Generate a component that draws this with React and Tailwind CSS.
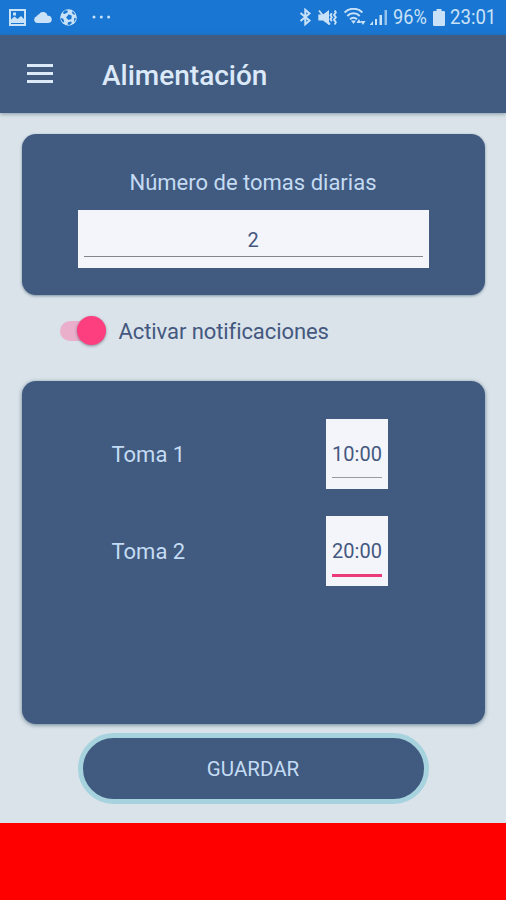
import { useState } from 'react';

const INITIAL_FEEDINGS = [
  { id: 1, label: 'Toma 1', time: '10:00' },
  { id: 2, label: 'Toma 2', time: '20:00' },
];

function StatusBar() {
  return (
    <div className="flex h-[35px] shrink-0 items-center bg-[#1976d2] pb-px text-[#c9e2f8]">
      <svg className="ml-[9px] h-[17px] w-[17px]" viewBox="0 0 17 17" fill="none" aria-hidden="true">
        <rect x="1" y="1" width="15" height="15" stroke="currentColor" strokeWidth="2" />
        <path d="M2 14v-3.500l3.500-3 3 2.500 3.500-3L15 10v4z" fill="currentColor" />
        <path d="M4 3.500h3v3H4z" fill="currentColor" />
      </svg>
      <svg className="ml-2 h-[12px] w-[18px]" viewBox="0 0 18 12" fill="currentColor" aria-hidden="true">
        <path d="M3.500 12A3.400 3.400 0 0 1 2.800 5.300 3 3 0 0 1 5 3.200 4.600 4.600 0 0 1 13.500 4.800 3.600 3.600 0 0 1 14.600 12z" />
      </svg>
      <svg className="ml-[8px] h-[17px] w-[17px]" viewBox="0 0 17 17" aria-hidden="true">
        <circle cx="8.500" cy="8.500" r="8.300" fill="currentColor" />
        <g fill="#1976d2">
          <path d="M8.800 5.200l3 1.500-.4 3.300-3 1-2.300-2.500z" />
          <path d="M5 1.300l3 .4-.8 2L4.300 5 2.600 4z" />
          <path d="M12.600 2.200l2.600 3-1.400.5-2-2z" />
          <path d="M1 9l2 .4 1.300 2.800-1 1.300C1.700 12.400 1 11 1 9z" />
          <path d="M8 13.200l3.200-.8.600 1.500-2.300 2-2-.4z" />
          <path d="M14 9.300l1.800-.5c0 1.700-.6 3-1.500 4.100z" />
        </g>
      </svg>
      <svg className="ml-[15px] h-[4px] w-[19px]" viewBox="0 0 19 4" fill="currentColor" aria-hidden="true">
        <circle cx="2" cy="2" r="1.500" />
        <circle cx="9.300" cy="2" r="1.500" />
        <circle cx="16.600" cy="2" r="1.500" />
      </svg>

      <svg className="ml-auto h-[18px] w-[13px]" viewBox="0 0 13 18" fill="none" stroke="currentColor" strokeWidth="2" aria-hidden="true">
        <path d="M1.500 5l9 7.500-4.200 3.700V1.800l4.200 3.700-9 7.500" />
      </svg>
      <svg className="ml-[6px] h-[17px] w-[19px]" viewBox="0 0 19 17" aria-hidden="true">
        <path d="M.3 5.500H5L11 1v15L5 11.500H.3z" fill="currentColor" />
        <path d="M1 1.500l11 14" stroke="currentColor" strokeWidth="1.800" />
        <path d="M13.800 4.200l-1.300 2 1.300 2-1.300 2 1.300 2M16.800 1.500l1 2-1.800 2.400 1.800 2.400-1.800 2.400 1.800 2.400-1 2.400" fill="none" stroke="currentColor" strokeWidth="1.900" />
      </svg>
      <svg className="ml-[7px] h-[18px] w-[22px]" viewBox="0 0 22 18" fill="none" stroke="currentColor" strokeWidth="2" aria-hidden="true">
        <path d="M.6 4.500a12.500 12.500 0 0 1 17.800 0M3.300 8a8.600 8.600 0 0 1 12.400 0M6 11.300a5 5 0 0 1 7 0" />
        <path d="M7 12.500h5L9.500 16z" fill="currentColor" stroke="none" />
        <path d="M12.500 15l2.400-4 2.400 4zM16.500 13h5l-2.500 4z" fill="currentColor" stroke="none" />
      </svg>
      <svg className="ml-[4px] h-[16px] w-[17px]" viewBox="0 0 17 16" fill="currentColor" aria-hidden="true">
        <path d="M0 15.500L3 12v4H0zM5 10h2v6H5zM9.500 6h2.500v10H9.500z" />
        <path d="M14.500 1H17v15h-2.500z" opacity=".7" />
      </svg>
      <span className="ml-[6px] w-[36px] origin-left scale-x-[0.91] whitespace-nowrap text-[20px] leading-none">96%</span>
      <svg className="ml-[4px] h-[17px] w-[12px]" viewBox="0 0 12 17" fill="currentColor" aria-hidden="true">
        <path d="M3.500 0h5v2H11a1 1 0 0 1 1 1v13a1 1 0 0 1-1 1H1a1 1 0 0 1-1-1V3a1 1 0 0 1 1-1h2.500z" />
      </svg>
      <span className="mr-[10px] ml-[5px] w-[46px] origin-left scale-x-[0.93] whitespace-nowrap text-[20px] leading-none">23:01</span>
    </div>
  );
}

function AppBar({ title }) {
  return (
    <header className="z-10 flex h-[78px] shrink-0 items-center bg-[#425b80] pl-[27px] text-[#dbe9f8] shadow-[0_1px_4px_rgba(60,90,100,0.55)]">
      <button type="button" aria-label="Abrir menú" className="mb-[2px] flex h-[19px] w-[26px] flex-col justify-between">
        <span className="h-[3px] w-full bg-current" />
        <span className="h-[3px] w-full bg-current" />
        <span className="h-[3px] w-full bg-current" />
      </button>
      <h1 className="mt-[3px] ml-[49px] text-[28px] leading-8 font-medium">{title}</h1>
    </header>
  );
}

export default function App() {
  const [count, setCount] = useState('2');
  const [notify, setNotify] = useState(true);
  const [feedings, setFeedings] = useState(INITIAL_FEEDINGS);
  const [activeId, setActiveId] = useState(2);

  const handleTime = (id, time) => {
    setFeedings((prev) => prev.map((f) => (f.id === id ? { ...f, time } : f)));
  };

  return (
    <div className="flex h-[900px] w-[506px] flex-col overflow-hidden bg-[#dae3ea] font-['Roboto',sans-serif]">
      <StatusBar />
      <AppBar title="Alimentación" />

      <main className="flex flex-1 flex-col px-[21.5px] pt-[21px]">
        <section className="flex h-[161px] shrink-0 flex-col items-center rounded-[14px] bg-[#415a80] pt-[33px] shadow-[0_1px_3px_rgba(60,90,110,0.6)]">
          <label htmlFor="count" className="text-[22px] leading-8 text-[#c4dcf3]">
            Número de tomas diarias
          </label>
          <div className="mt-[11px] h-[58px] w-[351px] bg-[#f3f5fa] px-[6px]">
            <input
              id="count"
              value={count}
              onChange={(e) => setCount(e.target.value)}
              className="block h-[47px] w-full border-b-[1.5px] border-[#85838b] pt-[13px] text-center text-[20px] text-[#44587f] outline-none"
            />
          </div>
        </section>

        <div className="mt-[20px] flex h-[32px] shrink-0 items-center pl-[38.5px]">
          <button
            type="button"
            role="switch"
            aria-checked={notify}
            aria-label="Activar notificaciones"
            onClick={() => setNotify(!notify)}
            className={`mb-px flex h-[20px] w-[45.5px] items-center rounded-full bg-[#e9afcb] ${notify ? 'justify-end' : 'justify-start'}`}
          >
            <span className="h-[29px] w-[29px] rounded-full bg-[#fd3f7f] shadow-[0_1px_3px_rgba(60,60,80,0.55)]" />
          </button>
          <span className="mt-[2px] ml-[13px] text-[22px] leading-8 tracking-[-0.08px] text-[#44587f]">Activar notificaciones</span>
        </div>

        <section className="mt-[34px] flex h-[343px] shrink-0 flex-col gap-[27px] rounded-[14px] bg-[#415a80] pt-[38px] shadow-[0_1px_4px_rgba(60,90,110,0.7)]">
          {feedings.map((f) => (
            <div key={f.id} className="flex h-[70px] items-center pl-[90px]">
              <label htmlFor={`time-${f.id}`} className="mt-[2px] w-[214.5px] text-[22px] leading-8 text-[#c4dcf3]">
                {f.label}
              </label>
              <div className="h-[70px] w-[62px] bg-[#f3f5fa] px-[6px]">
                <input
                  id={`time-${f.id}`}
                  value={f.time}
                  onFocus={() => setActiveId(f.id)}
                  onChange={(e) => handleTime(f.id, e.target.value)}
                  className={`block w-full pt-[12px] text-center text-[20px] text-[#44587f] outline-none ${
                    activeId === f.id ? 'h-[61px] border-b-[3px] border-[#ea3a78]' : 'h-[59px] border-b-[1.5px] border-[#99999f]'
                  }`}
                />
              </div>
            </div>
          ))}
        </section>

        <button
          type="button"
          className="mt-[9px] h-[71px] w-[351px] shrink-0 self-center rounded-full border-[5.5px] border-[#a6d3de] bg-[#415a80] pt-[2px] text-[20.500px] text-[#c4dcf3]"
        >
          GUARDAR
        </button>
      </main>

      <footer className="h-[77px] shrink-0 bg-[#ff0000]" />
    </div>
  );
}
